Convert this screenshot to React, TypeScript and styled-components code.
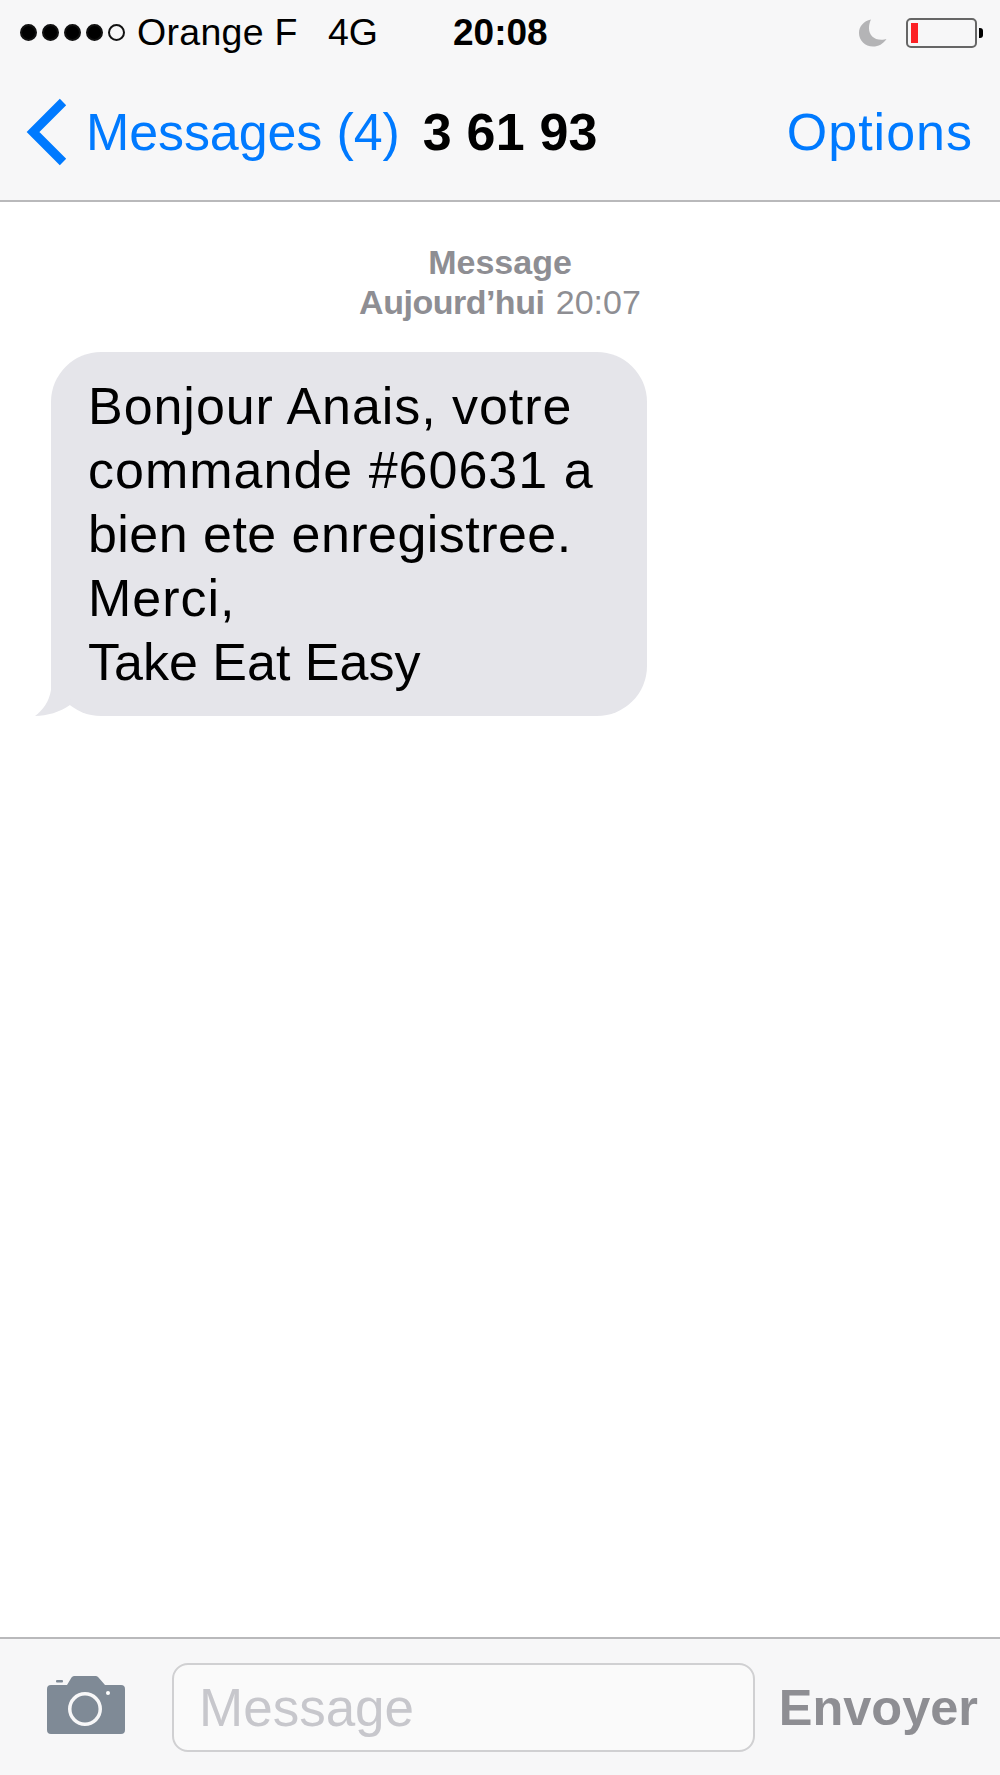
import React from 'react';
import styled, { createGlobalStyle } from 'styled-components';

const GlobalStyle = createGlobalStyle`
  html, body {
    margin: 0;
    padding: 0;
    background: #fff;
  }
  body {
    font-family: "Liberation Sans", Arial, sans-serif;
  }
`;

const messageLines = [
  { text: 'Bonjour Anais, votre', tracking: 0.95 },
  { text: 'commande #60631 a', tracking: 1 },
  { text: 'bien ete enregistree.', tracking: 0.45 },
  { text: 'Merci,', tracking: 1 },
  { text: 'Take Eat Easy', tracking: 0 },
];

const App: React.FC = () => (
  <Screen>
    <GlobalStyle />
    <TopBar>
      <StatusBar>
        <Signal>
          {[0, 1, 2, 3].map((i) => <Dot key={i} />)}
          <Dot $empty />
        </Signal>
        <Carrier>Orange F</Carrier>
        <Network>4G</Network>
        <Clock>20:08</Clock>
        <StatusRight>
          <svg width="30" height="30" viewBox="0 0 30 30">
            <path
              d="M13 1.500C5.500 3 1 8.500 1 15c0 7.500 6 13.500 14 13.500 5.500 0 10-2.500 13.500-7.500-1.500.5-3 .8-5 .8C15.500 21.800 11 16.500 11 10.500c0-3.300.7-6.200 2-9z"
              fill="#b4b4b6"
            />
          </svg>
          <Battery>
            <BatteryLevel />
          </Battery>
          <BatteryCap />
        </StatusRight>
      </StatusBar>
      <NavBar>
        <BackLink>
          <svg width="42" height="68" viewBox="0 0 42 68">
            <path d="M37 4L7 34l30 30" fill="none" stroke="#007aff" strokeWidth="9" />
          </svg>
          <BackLabel>Messages (4)</BackLabel>
        </BackLink>
        <Title>3 61 93</Title>
        <Options>Options</Options>
      </NavBar>
    </TopBar>

    <Thread>
      <Meta>
        <MetaStrong>Message</MetaStrong>
        <div><MetaStrong $tight>Aujourd’hui</MetaStrong> 20:07</div>
      </Meta>
      <Bubble>
        {messageLines.map((line) => (
          <BubbleLine key={line.text} $tracking={line.tracking}>{line.text}</BubbleLine>
        ))}
        <Tail width="40" height="50" viewBox="0 0 40 50">
          <path d="M16 0V24C14 36 8 44 0 50c12 0 25-4 35-11l5-39z" fill="#e5e5ea" />
        </Tail>
      </Bubble>
    </Thread>

    <Composer>
      <CameraIcon width="78" height="58" viewBox="0 0 78 58">
        <path
          fillRule="evenodd"
          d="M4 9h16l4.500-7.500Q25.500 0 27 0h22q1.500 0 2.500 1.500L58 9h16a4 4 0 0 1 4 4v41a4 4 0 0 1-4 4H4a4 4 0 0 1-4-4V13a4 4 0 0 1 4-4zm34 7a17 17 0 1 0 0 34 17 17 0 0 0 0-34zm0 3.500a13.500 13.500 0 1 1 0 27 13.500 13.500 0 0 1 0-27z"
          fill="#7f8a96"
        />
        <rect x="9" y="4" width="7" height="2.500" rx="1" fill="#7f8a96" />
        <circle cx="61" cy="17" r="2" fill="#fff" />
      </CameraIcon>
      <Input>Message</Input>
      <Send>Envoyer</Send>
    </Composer>
  </Screen>
);
export default App;

const Screen = styled.div`
  display: flex;
  flex-direction: column;
  width: 1000px;
  height: 1775px;
  overflow: hidden;
  background: #fff;
`;

const TopBar = styled.div`
  flex: none;
  height: 202px;
  box-sizing: border-box;
  background: #f7f7f8;
  border-bottom: 2px solid #b9b9bb;
`;

const StatusBar = styled.div`
  display: flex;
  align-items: center;
  height: 65px;
  padding: 0 17px 0 20px;
  color: #000;
  font-size: 37.500px;
`;

const Signal = styled.div`
  display: flex;
  gap: 5px;
`;

const Dot = styled.span<{ $empty?: boolean }>`
  width: 17px;
  height: 17px;
  box-sizing: border-box;
  border-radius: 50%;
  border: 2px solid #111;
  background: ${(p) => (p.$empty ? 'transparent' : '#000')};
`;

const Carrier = styled.span`
  margin-left: 12px;
  width: 191px;
  letter-spacing: 0.3px;
`;

const Network = styled.span`
  width: 125px;
`;

const Clock = styled.span`
  font-weight: 700;
  font-size: 37px;
`;

const StatusRight = styled.div`
  display: flex;
  align-items: center;
  margin-left: auto;

  & svg {
    margin-right: 18px;
  }
`;

const Battery = styled.div`
  width: 71px;
  height: 30px;
  box-sizing: border-box;
  padding: 3px;
  border: 2px solid #666;
  border-radius: 5px;
`;

const BatteryLevel = styled.div`
  width: 7px;
  height: 100%;
  background: #fc2125;
`;

const BatteryCap = styled.div`
  width: 4px;
  height: 10px;
  margin-left: 2px;
  background: #000;
  border-radius: 0 3px 3px 0;
`;

const NavBar = styled.div`
  display: flex;
  align-items: center;
  height: 133px;
  padding: 0 27px 0 26px;
  font-size: 52px;
`;

const BackLink = styled.div`
  display: flex;
  align-items: center;
  color: #007aff;
`;

const BackLabel = styled.span`
  margin-left: 18px;
  letter-spacing: -0.1px;
`;

const Title = styled.div`
  margin-left: 23px;
  color: #000;
  font-weight: 700;
  letter-spacing: 0.2px;
`;

const Options = styled.div`
  margin-left: auto;
  color: #007aff;
  letter-spacing: 1px;
`;

const Thread = styled.div`
  flex: 1;
  display: flex;
  flex-direction: column;
  align-items: flex-start;
  padding: 40px 0 0 51px;
`;

const Meta = styled.div`
  align-self: stretch;
  margin-left: -51px;
  color: #8e8e93;
  font-size: 34px;
  line-height: 40px;
  text-align: center;
`;

const MetaStrong = styled.span<{ $tight?: boolean }>`
  font-weight: 700;
  letter-spacing: ${(p) => (p.$tight ? '-0.5px' : '0')};
  margin-right: ${(p) => (p.$tight ? '2px' : '0')};
`;

const Bubble = styled.div`
  position: relative;
  width: 596px;
  height: 364px;
  box-sizing: border-box;
  margin-top: 30px;
  padding: 22px 0 0 37px;
  background: #e5e5ea;
  border-radius: 50px;
  color: #000;
  font-size: 52px;
  line-height: 64px;
`;

const BubbleLine = styled.div<{ $tracking: number }>`
  letter-spacing: ${(p) => p.$tracking}px;
`;

const Tail = styled.svg`
  position: absolute;
  left: -16px;
  bottom: 0;
`;

const Composer = styled.div`
  flex: none;
  display: flex;
  align-items: center;
  height: 138px;
  box-sizing: border-box;
  padding: 0 22px 0 47px;
  background: #f7f7f8;
  border-top: 2px solid #b9b9bb;
`;

const CameraIcon = styled.svg`
  margin-bottom: 4px;
`;

const Input = styled.div`
  display: flex;
  align-items: center;
  width: 583px;
  height: 89px;
  box-sizing: border-box;
  margin-left: 47px;
  padding-left: 25px;
  background: #fafafa;
  border: 2px solid #d0d0d2;
  border-radius: 16px;
  color: #c7c7cc;
  font-size: 53px;
`;

const Send = styled.div`
  margin-left: auto;
  color: #8e8e93;
  font-size: 50.500px;
  font-weight: 700;
`;
